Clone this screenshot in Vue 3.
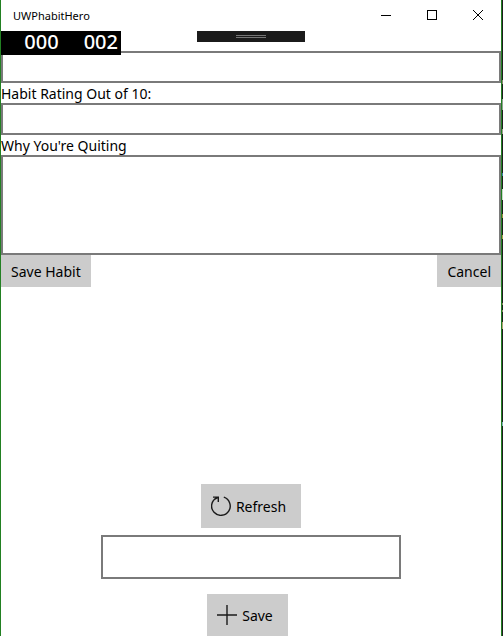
<script setup>
import { ref } from 'vue'

const habit = ref('')
const rating = ref('')
const reason = ref('')
const note = ref('')
const counters = ['000', '002']
</script>

<template>
  <div class="desktop">
    <div class="window">
      <header class="titlebar">
        <span class="title">UWPhabitHero</span>
        <div class="controls">
          <button type="button" aria-label="Minimize">
            <svg width="10" height="10" viewBox="0 0 10 10" shape-rendering="crispEdges"><path d="M0 5.5H10" /></svg>
          </button>
          <button type="button" aria-label="Maximize">
            <svg width="10" height="10" viewBox="0 0 10 10" shape-rendering="crispEdges"><path d="M.5 .5H9.5V9.5H.5Z" /></svg>
          </button>
          <button type="button" aria-label="Close">
            <svg width="10" height="10" viewBox="0 0 10 10"><path d="M0 0L10 10M10 0L0 10" /></svg>
          </button>
        </div>
      </header>

      <main class="page">
        <div class="counters">
          <span v-for="value in counters" :key="value">{{ value }}</span>
        </div>
        <div class="handle"><i></i><i></i></div>

        <form class="form" @submit.prevent>
          <input v-model="habit" class="field first" type="text" aria-label="Habit" />
          <label for="rating">Habit Rating Out of 10:</label>
          <input id="rating" v-model="rating" class="field" type="text" />
          <label for="reason">Why You're Quiting</label>
          <textarea id="reason" v-model="reason" class="field area"></textarea>
          <div class="actions">
            <button class="btn" type="submit">Save Habit</button>
            <button class="btn" type="button">Cancel</button>
          </div>
        </form>

        <section class="sync">
          <button class="btn large" type="button">
            <svg width="20" height="20" viewBox="0 0 20 20">
              <path d="M12.8 1.2A9.3 9.3 0 1 1 5.6 1.8M2 1.1H7.3V6M7.3 1.1L4 3.2" />
            </svg>
            <span>Refresh</span>
          </button>
          <input v-model="note" class="field note" type="text" aria-label="Note" />
          <button class="btn large save" type="button">
            <svg width="20" height="20" viewBox="0 0 20 20"><path d="M10 0V20M0 10H20" /></svg>
            <span>Save</span>
          </button>
        </section>
      </main>
    </div>
  </div>
</template>

<style>
body {
  margin: 0;
}
</style>

<style scoped>
/* The strip right of the window shows slivers of the editor behind it. */
.desktop {
  display: flex;
  min-height: 100vh;
  padding-right: 1px;
  box-sizing: border-box;
  background: linear-gradient(
    #1e1e1e 80px, #8a8a70 80px 84px, #1e1e1e 84px 99px,
    #8fa08f 99px 110px, #1e1e1e 110px 129px, #a0a090 129px 134px,
    #1e1e1e 134px 173px, #3d7fa8 173px 176px, #1e1e1e 176px 189px,
    #c8d8c8 189px 200px, #1e1e1e 200px 214px, #a08a40 214px 218px,
    #1e1e1e 218px 235px, #b09a50 235px 239px, #1e1e1e 239px 303px,
    #8a8a60 303px 305px, #1e1e1e 305px 310px, #8a8a60 310px 312px,
    #1e1e1e 312px 322px, #b0a070 322px 329px, #1e1e1e 329px 422px,
    #80b0b8 422px 426px, #1e1e1e 426px
  );
  color: #000;
  font: 14px/20px "Noto Sans", "Open Sans", sans-serif;
}
.window {
  flex: 1;
  display: flex;
  flex-direction: column;
  min-width: 0;
  border: solid #228022;
  border-width: 0 1px;
  background: #fff;
}
.titlebar {
  display: flex;
  justify-content: space-between;
  height: 31px;
}
.title {
  padding-left: 12px;
  font-size: 11px;
  line-height: 31px;
}
.controls {
  display: flex;
}
.controls button {
  display: flex;
  align-items: center;
  justify-content: center;
  width: 46px;
  height: 30px;
  padding: 0;
  border: 0;
  background: none;
}
svg {
  flex: none;
  fill: none;
  stroke: #000;
}
.page {
  position: relative;
  flex: 1;
  display: flex;
  flex-direction: column;
}
.counters {
  position: absolute;
  top: 0;
  left: 0;
  display: flex;
  justify-content: flex-end;
  gap: 25px;
  box-sizing: border-box;
  width: 120px;
  height: 24px;
  padding-right: 3px;
  background: #000;
  color: #fff;
  font-size: 20px;
  font-weight: 500;
  line-height: 22px;
}
.handle {
  position: absolute;
  top: 0;
  left: 50%;
  display: flex;
  flex-direction: column;
  align-items: center;
  justify-content: center;
  gap: 1px;
  width: 108px;
  height: 11px;
  margin-left: -54px;
  background: #1b1b1b;
}
.handle i {
  width: 30px;
  height: 1px;
  background: #767676;
}
.form {
  display: flex;
  flex-direction: column;
}
.form label {
  height: 20px;
  line-height: 22px;
}
.field {
  display: block;
  box-sizing: border-box;
  width: 100%;
  height: 32px;
  margin: 0;
  padding: 4px 8px;
  border: 2px solid #7a7a7a;
  border-radius: 0;
  background: #fff;
  font: inherit;
  outline: none;
}
.first {
  margin-top: 20px;
}
.area {
  height: 100px;
  resize: none;
}
.actions {
  display: flex;
  justify-content: space-between;
}
.btn {
  display: flex;
  align-items: center;
  height: 32px;
  padding: 2px 10px 0;
  border: 0;
  background: #ccc;
  color: #000;
  font: inherit;
}
.sync {
  display: flex;
  flex-direction: column;
  align-items: center;
  margin-top: auto;
}
.large {
  gap: 5px;
  height: 44px;
  padding: 0 15px 0 10px;
}
.large svg {
  stroke: #1a1a1a;
  stroke-width: 1.4;
}
.large span {
  line-height: 22px;
  padding-top: 2px;
}
.large.save {
  height: 42px;
  margin-right: 7px;
}
.note {
  width: 300px;
  max-width: 100%;
  height: 44px;
  margin: 7px 0 15px;
}
</style>
